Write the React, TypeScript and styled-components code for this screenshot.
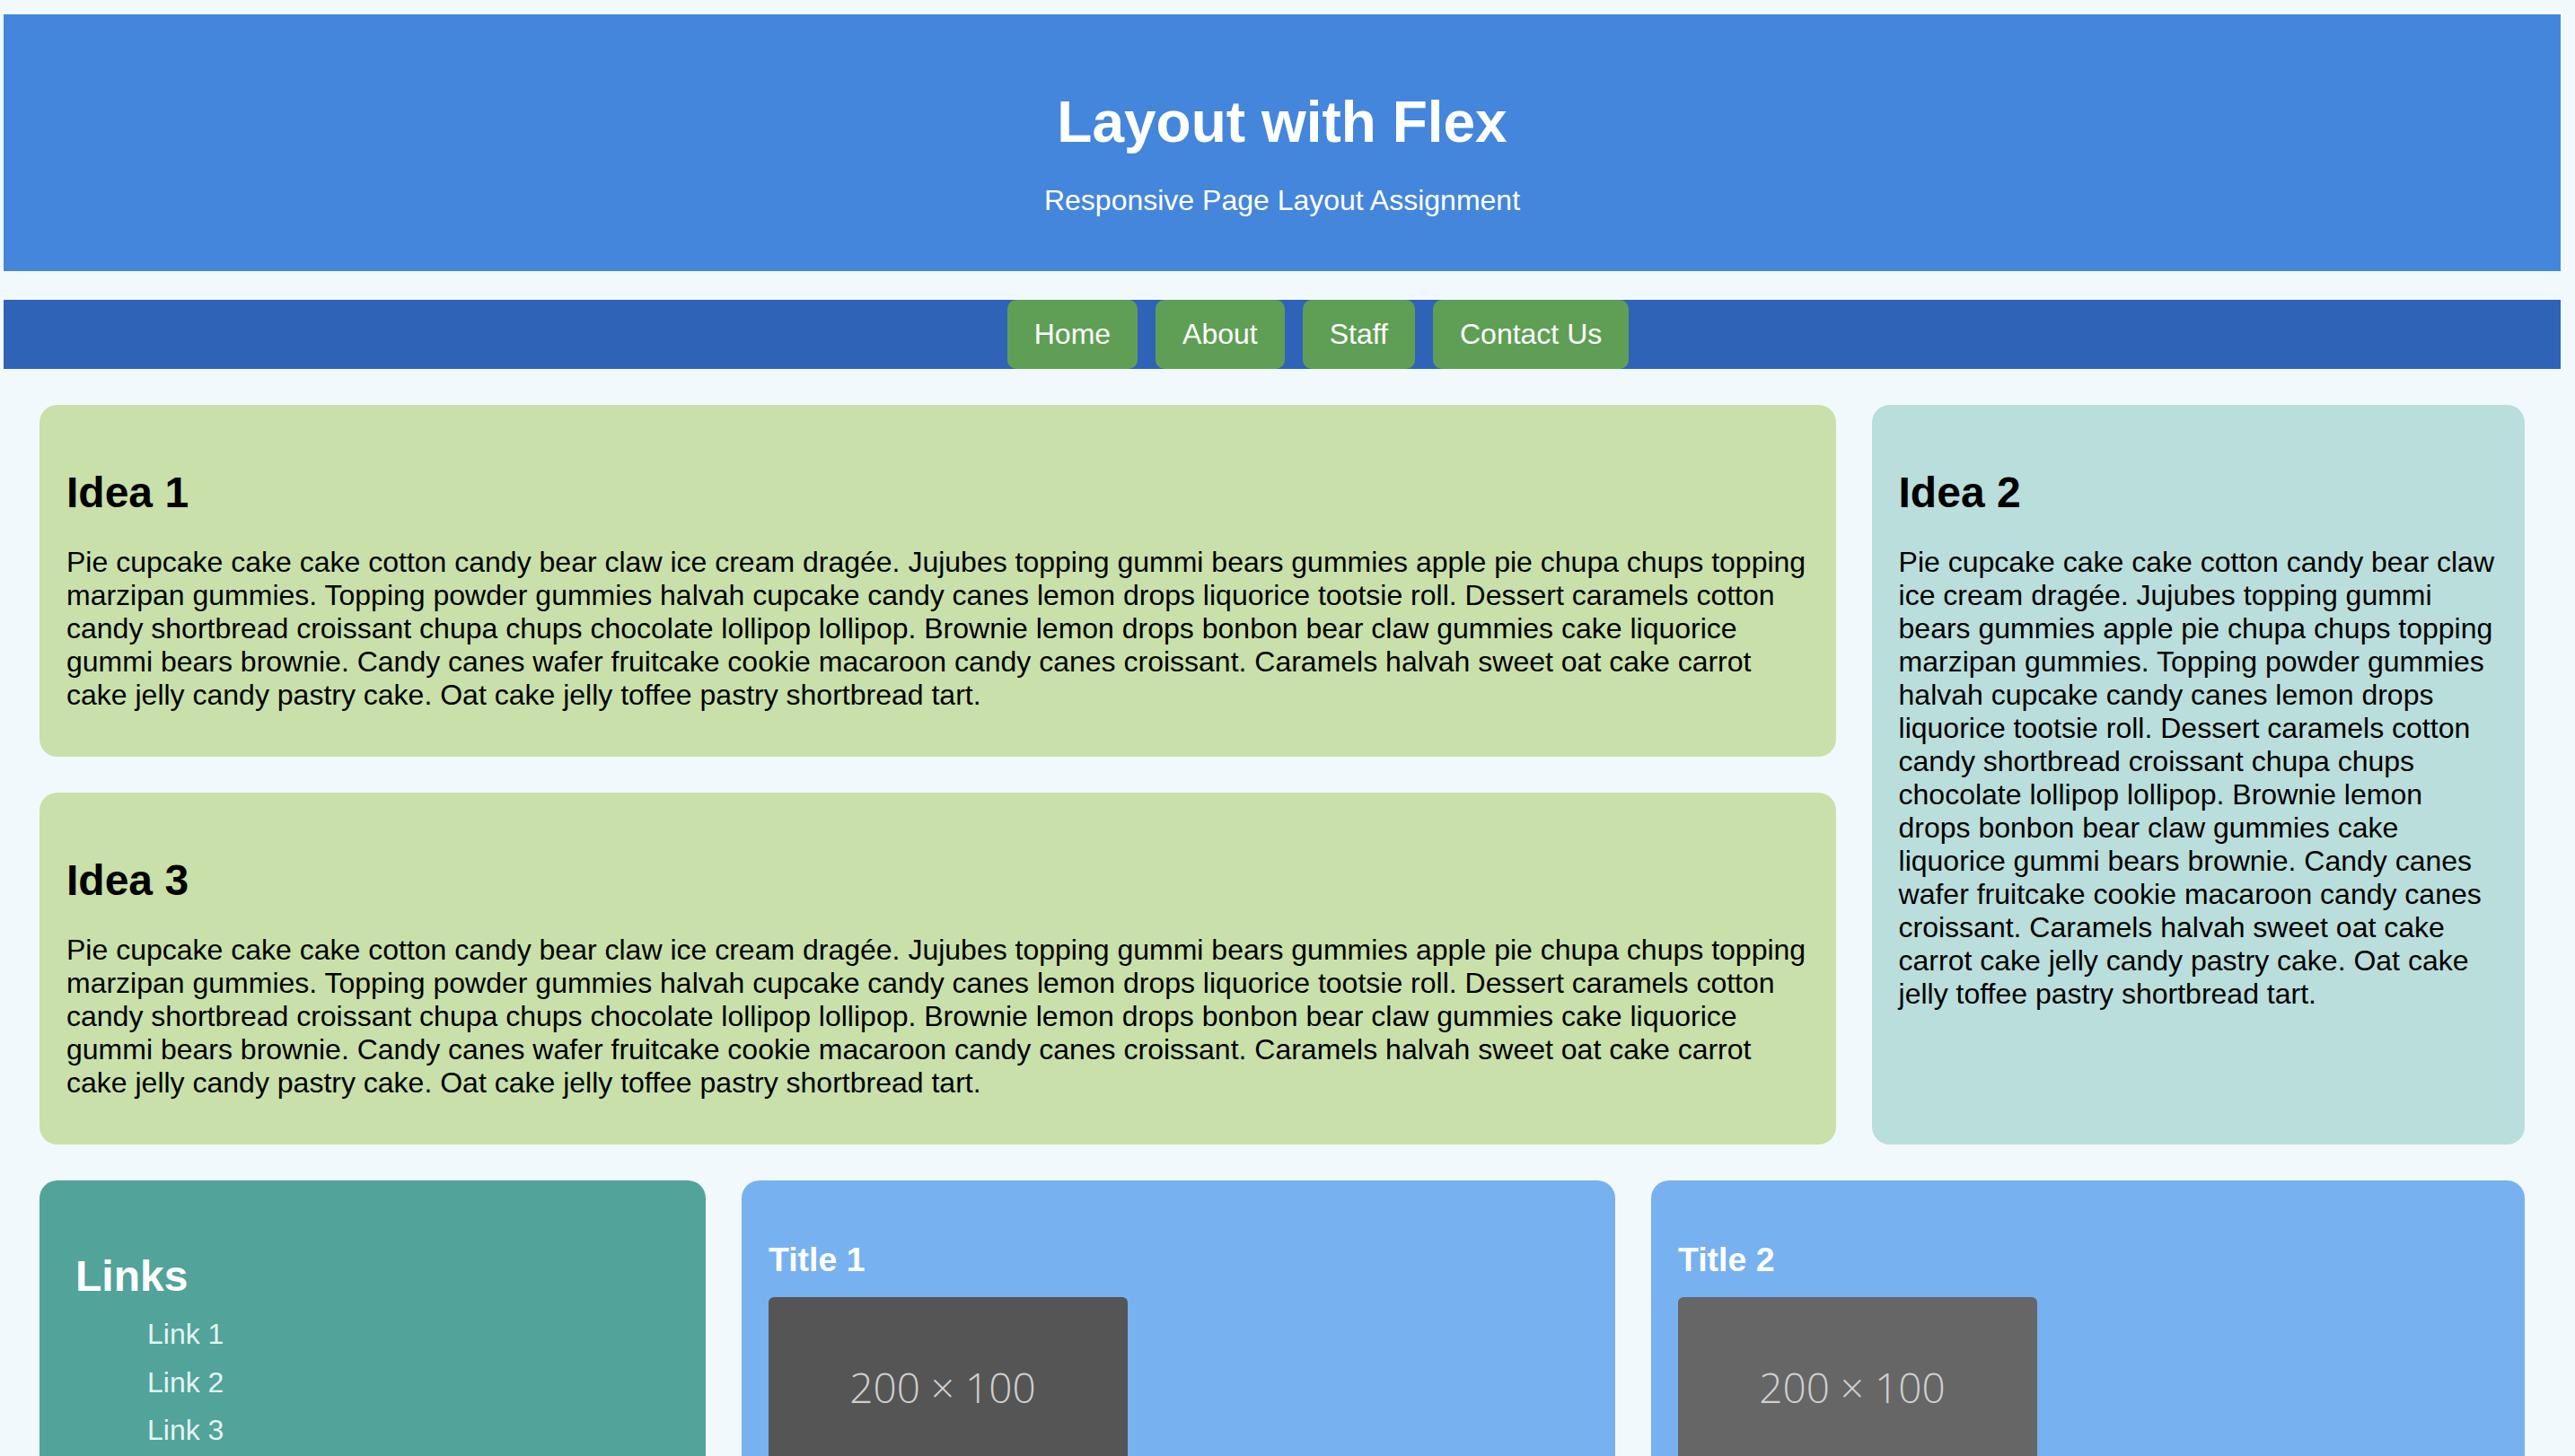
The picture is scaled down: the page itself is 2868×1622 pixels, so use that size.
import React from "react";
import styled, { createGlobalStyle } from "styled-components";

const GlobalStyle = createGlobalStyle`
  html, body {
    margin: 0;
    padding: 0;
    background: #f1f9fc;
  }
  body {
    font-family: "Liberation Sans", Arial, Helvetica, sans-serif;
    color: #000;
  }
  * { box-sizing: border-box; }
`;

const Page = styled.div`
  padding: 16px 16px 0 4px;
  min-height: 1622px;
`;

const Header = styled.header`
  background: #4486dc;
  color: #fff;
  text-align: center;
  padding: 40px;
  height: 286px;
`;

const SiteTitle = styled.h1`
  margin: 42.88px 0 0;
  font-size: 64px;
  font-weight: 700;
  line-height: normal;
`;

const Tagline = styled.p`
  margin: 32px 0 20px;
  font-size: 32px;
  line-height: normal;
`;

const NavBar = styled.nav`
  margin-top: 32px;
  background: #2f63b8;
`;

const NavList = styled.ul`
  list-style: none;
  margin: 0;
  padding: 0 0 0 80px;
  display: flex;
  justify-content: center;
  gap: 20px;
`;

const NavButton = styled.li`
  background: #5f9f55;
  color: #fff;
  font-size: 32px;
  line-height: normal;
  padding: 20px 30px;
  border-radius: 10px;
`;

const Main = styled.main`
  margin: 40px 40px 0;
  display: flex;
  flex-direction: column;
  gap: 40px;
`;

const IdeaGrid = styled.section`
  display: grid;
  grid-template-columns: 11fr 4fr;
  grid-template-rows: auto auto;
  gap: 40px;
`;

const IdeaCard = styled.article<{ $tone: string; $tall?: boolean }>`
  background: ${(p) => p.$tone};
  border-radius: 20px;
  padding: 30px;
  grid-row: ${(p) => (p.$tall ? "1 / span 2" : "auto")};
  grid-column: ${(p) => (p.$tall ? "2" : "1")};
`;

const IdeaTitle = styled.h2`
  margin: 39.84px 0 0;
  font-size: 48px;
  font-weight: 700;
  line-height: normal;
`;

const IdeaText = styled.p`
  margin: 32px 0 20px;
  font-size: 32px;
  line-height: normal;
`;

const BottomRow = styled.section`
  display: grid;
  grid-template-columns: 742px 1fr 1fr;
  gap: 40px;
  align-items: stretch;
`;

const LinksPanel = styled.aside`
  background: #52a39a;
  border-radius: 20px;
  padding: 40px;
  color: #fff;
`;

const LinksTitle = styled.h2`
  margin: 39.84px 0 0;
  font-size: 48px;
  font-weight: 700;
  line-height: normal;
`;

const LinkList = styled.ul`
  list-style: none;
  margin: 19px 0 0;
  padding: 0 0 0 80px;
  display: flex;
  flex-direction: column;
  gap: 16.2px;
`;

const LinkItem = styled.li`
  font-size: 32px;
  line-height: normal;
  color: #e3f4f2;
`;

const TitleCard = styled.article`
  background: #78b1ef;
  border-radius: 20px;
  padding: 30px;
  color: #fff;
`;

const CardTitle = styled.h3`
  margin: 37.44px 0 0;
  font-size: 37.44px;
  font-weight: 700;
  line-height: normal;
`;

const Placeholder = styled.div<{ $shade: string }>`
  margin-top: 20px;
  width: 400px;
  height: 200px;
  border-radius: 6px;
  background: ${(p) => p.$shade};
  color: #cfcfcf;
  display: flex;
  align-items: center;
  justify-content: center;
  padding-right: 12px;
  font-family: "Open Sans", "Noto Sans", sans-serif;
  font-weight: 300;
  font-size: 46px;
`;

const LOREM =
  "Pie cupcake cake cake cotton candy bear claw ice cream dragée. Jujubes topping gummi bears gummies apple pie chupa chups topping marzipan gummies. Topping powder gummies halvah cupcake candy canes lemon drops liquorice tootsie roll. Dessert caramels cotton candy shortbread croissant chupa chups chocolate lollipop lollipop. Brownie lemon drops bonbon bear claw gummies cake liquorice gummi bears brownie. Candy canes wafer fruitcake cookie macaroon candy canes croissant. Caramels halvah sweet oat cake carrot cake jelly candy pastry cake. Oat cake jelly toffee pastry shortbread tart.";

const navItems = ["Home", "About", "Staff", "Contact Us"];
const links = ["Link 1", "Link 2", "Link 3"];

export default function App() {
  return (
    <>
      <GlobalStyle />
      <Page>
        <Header>
          <SiteTitle>Layout with Flex</SiteTitle>
          <Tagline>Responsive Page Layout Assignment</Tagline>
        </Header>
        <NavBar>
          <NavList>
            {navItems.map((item) => (
              <NavButton key={item}>{item}</NavButton>
            ))}
          </NavList>
        </NavBar>
        <Main>
          <IdeaGrid>
            <IdeaCard $tone="#c9e0ab">
              <IdeaTitle>Idea 1</IdeaTitle>
              <IdeaText>{LOREM}</IdeaText>
            </IdeaCard>
            <IdeaCard $tone="#badedb" $tall>
              <IdeaTitle>Idea 2</IdeaTitle>
              <IdeaText>{LOREM}</IdeaText>
            </IdeaCard>
            <IdeaCard $tone="#c9e0ab">
              <IdeaTitle>Idea 3</IdeaTitle>
              <IdeaText>{LOREM}</IdeaText>
            </IdeaCard>
          </IdeaGrid>
          <BottomRow>
            <LinksPanel>
              <LinksTitle>Links</LinksTitle>
              <LinkList>
                {links.map((l) => (
                  <LinkItem key={l}>{l}</LinkItem>
                ))}
              </LinkList>
            </LinksPanel>
            <TitleCard>
              <CardTitle>Title 1</CardTitle>
              <Placeholder $shade="#555555">200 × 100</Placeholder>
            </TitleCard>
            <TitleCard>
              <CardTitle>Title 2</CardTitle>
              <Placeholder $shade="#666666">200 × 100</Placeholder>
            </TitleCard>
          </BottomRow>
        </Main>
      </Page>
    </>
  );
}
